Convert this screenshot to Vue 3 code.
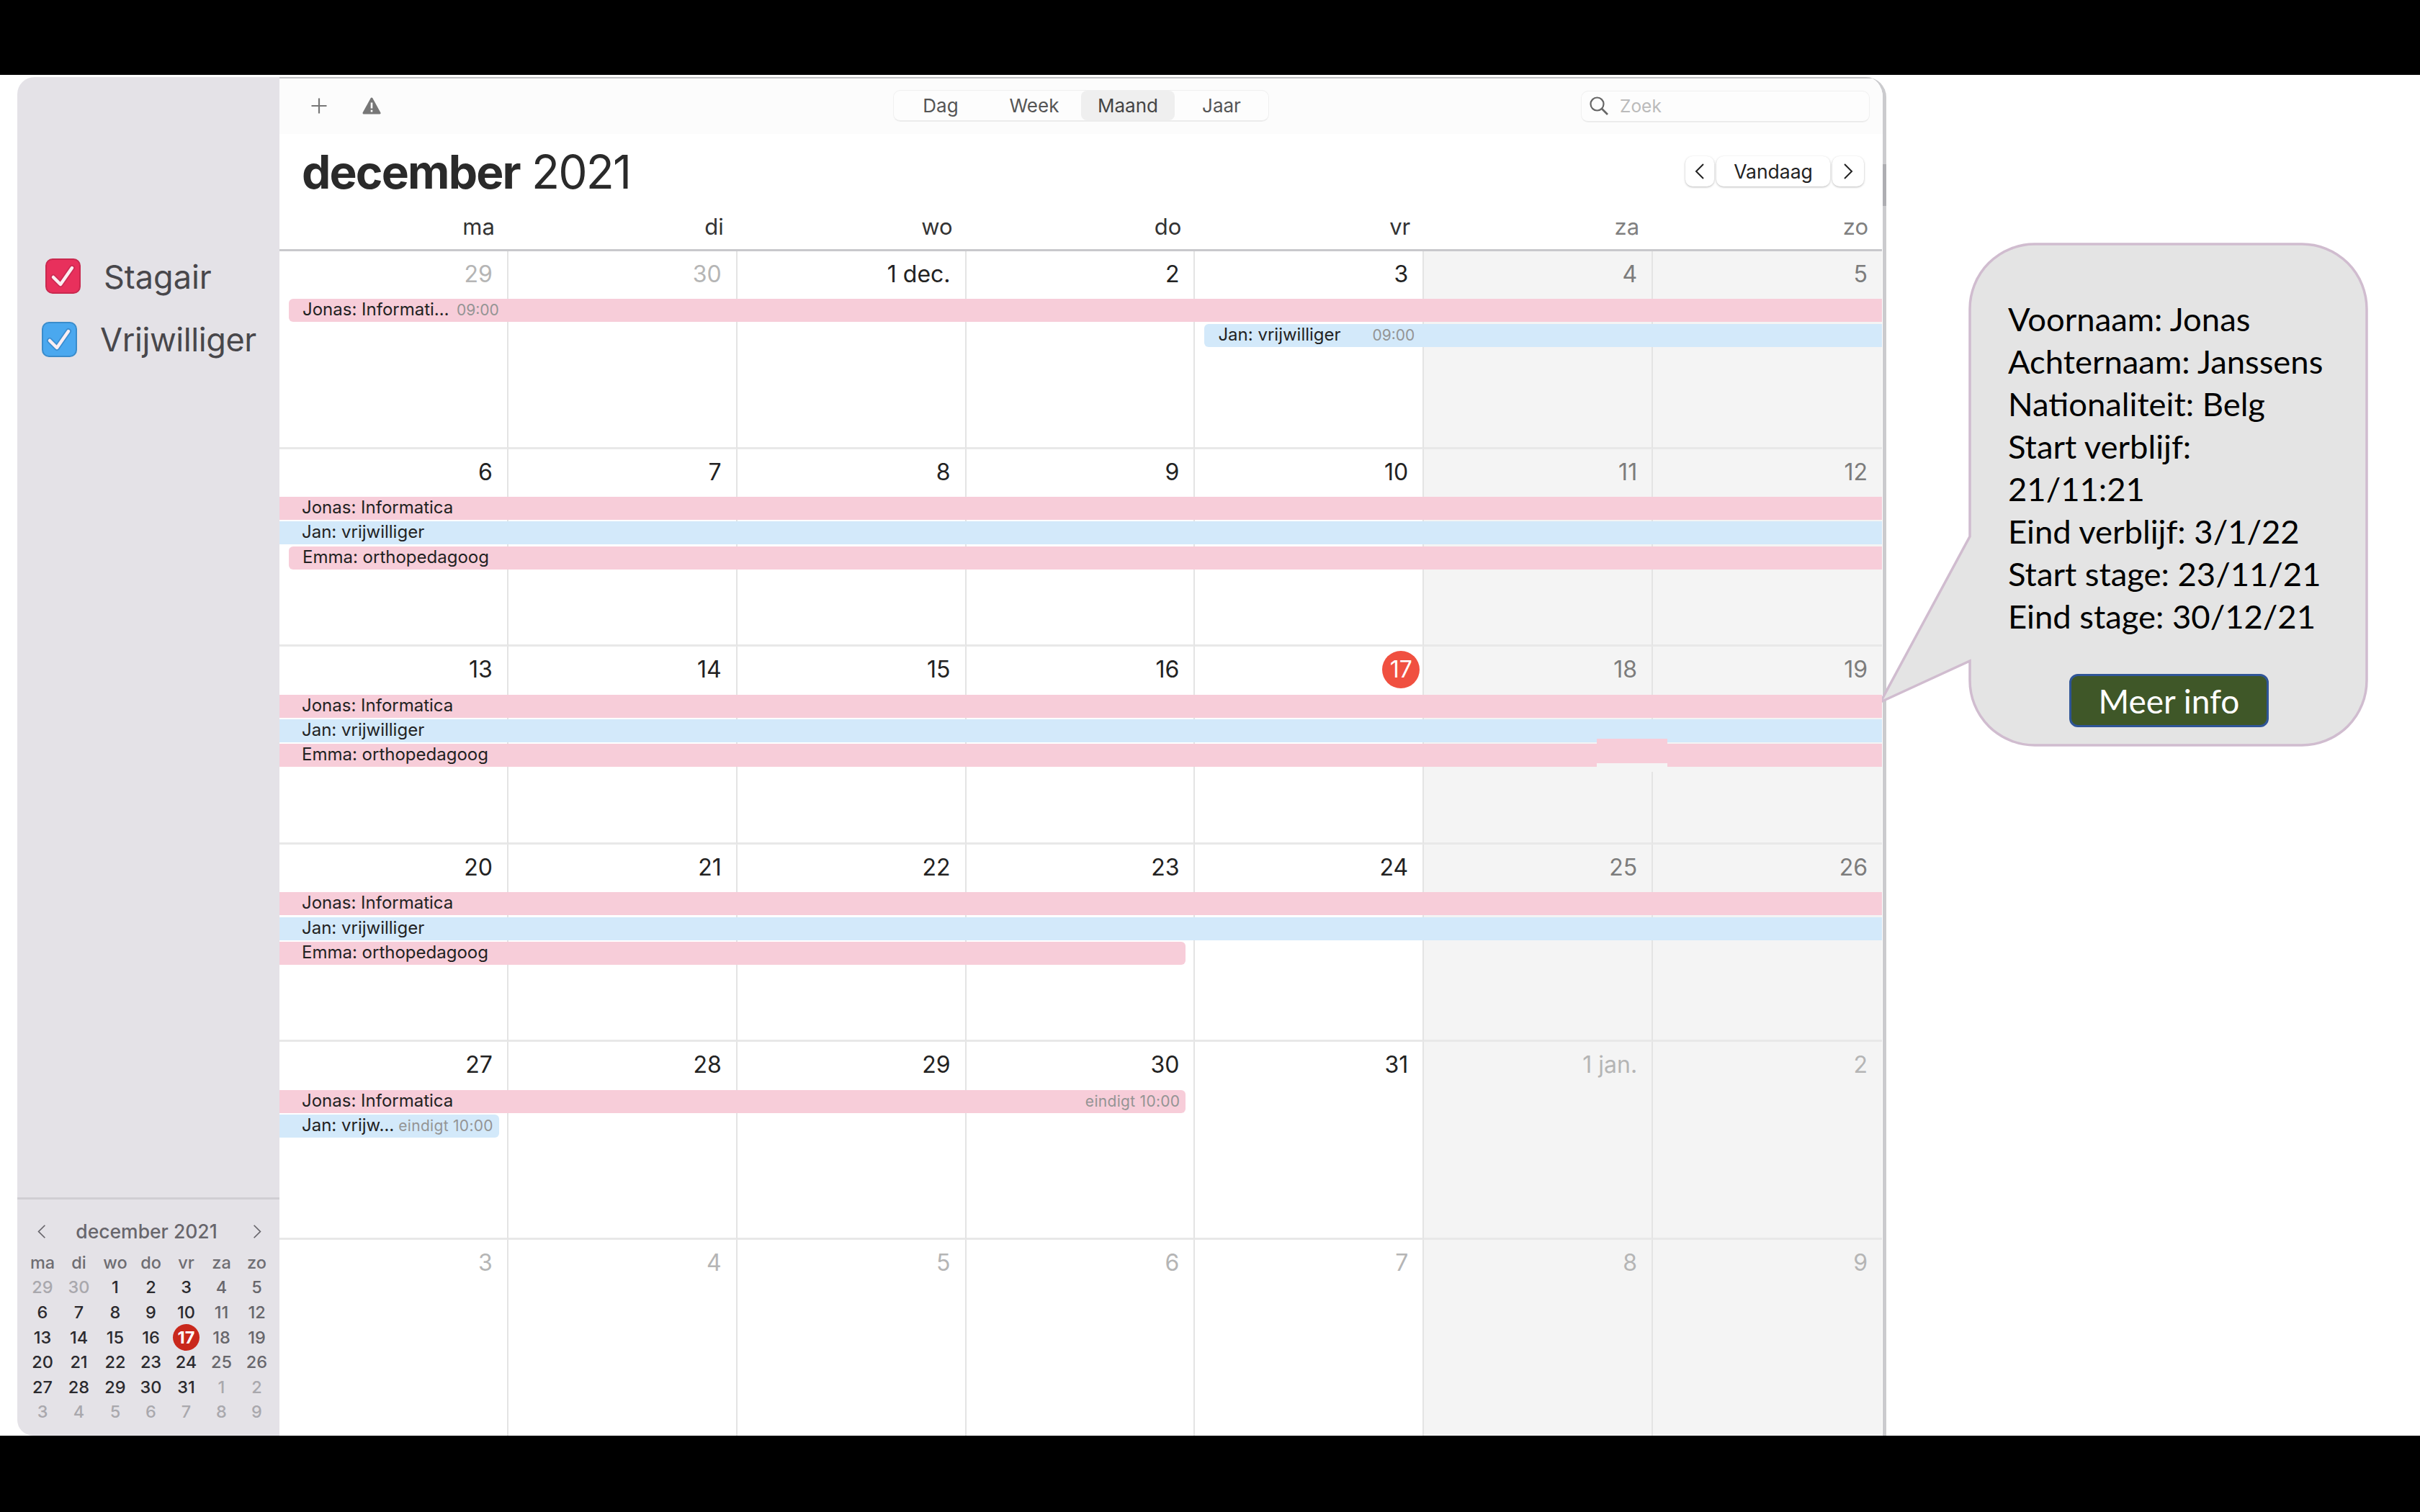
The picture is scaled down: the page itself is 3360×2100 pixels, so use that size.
<template>
  <div class="page">
    <div class="black top-bar"></div>

    <div class="middle">
      <div class="window">
        <!-- zijbalk -->
        <aside class="sidebar">
          <div class="cal-list">
            <div v-for="c in calendars" :key="c.name" :class="['cal-row', c.cls]">
              <span class="check">
                <svg viewBox="0 0 49 49" width="49" height="49">
                  <path class="halo" d="M11 26 L21 36 L37 13" fill="none" stroke-width="8" stroke-linecap="round" stroke-linejoin="round" />
                  <path d="M11 26 L21 36 L37 13" fill="none" stroke="#fbeef2" stroke-width="4.5" stroke-linecap="round" stroke-linejoin="round" />
                </svg>
              </span>
              <span class="cal-name">{{ c.name }}</span>
            </div>
          </div>

          <div class="mini">
            <div class="mini-head">
              <svg viewBox="0 0 16 24" width="14" height="21"><path d="M13 2 L3 12 L13 22" fill="none" stroke="#68666c" stroke-width="2" /></svg>
              <span class="mini-title">december 2021</span>
              <svg viewBox="0 0 16 24" width="14" height="21"><path d="M3 2 L13 12 L3 22" fill="none" stroke="#68666c" stroke-width="2" /></svg>
            </div>
            <div class="mini-grid">
              <span v-for="d in dayNames" :key="'m' + d" class="mini-day">{{ d }}</span>
              <span v-for="(n, i) in miniDays" :key="i" :class="['mini-num', miniClass(n, i)]">{{ n }}</span>
            </div>
          </div>
        </aside>

        <!-- hoofdvenster -->
        <main class="main">
          <div class="toolbar">
            <div class="tool-left">
              <svg viewBox="0 0 22 22" width="22" height="22"><path d="M11 0.5 V21.5 M0.5 11 H21.5" stroke="#777" stroke-width="2.2" fill="none" /></svg>
              <svg viewBox="0 0 26 26" width="26" height="26">
                <path d="M13 3 L24 23 H2 Z" fill="#777" stroke="#777" stroke-width="3" stroke-linejoin="round" />
                <path d="M13 8.5 V16.5 M13 18.8 V21.4" stroke="#fff" stroke-width="2.6" />
              </svg>
            </div>
            <div class="segments">
              <span v-for="s in views" :key="s" :class="['segment', { on: s === 'Maand' }]">{{ s }}</span>
            </div>
            <div class="search">
              <svg viewBox="0 0 26 26" width="26" height="26">
                <circle cx="10.5" cy="10.5" r="9" fill="none" stroke="#666" stroke-width="2.2" />
                <path d="M17 17 L25 25" stroke="#666" stroke-width="2.6" />
              </svg>
              <span>Zoek</span>
            </div>
          </div>

          <div class="title-row">
            <h1 class="title"><b>december</b> 2021</h1>
            <div class="nav">
              <span class="nav-btn prev">
                <svg viewBox="0 0 14 24" width="14" height="24"><path d="M12 2 L2 12 L12 22" fill="none" stroke="#222" stroke-width="2" /></svg>
              </span>
              <span class="nav-btn vandaag">Vandaag</span>
              <span class="nav-btn next">
                <svg viewBox="0 0 14 24" width="14" height="24"><path d="M2 2 L12 12 L2 22" fill="none" stroke="#222" stroke-width="2" /></svg>
              </span>
            </div>
          </div>

          <div class="weekdays">
            <span v-for="(d, i) in dayNames" :key="d" :class="{ weekend: i > 4 }">{{ d }}</span>
          </div>

          <div class="weeks">
            <div v-for="(w, wi) in weeks" :key="wi" class="week">
              <div
                v-for="(d, di) in w.days" :key="di"
                :class="['cell', { weekend: di > 4, dim: d.dim }]"
                :style="{ gridColumn: di + 1 }"
              >
                <span :class="['num', { today: d.today }]">{{ d.label }}</span>
              </div>
              <div
                v-for="(e, ei) in w.events" :key="'e' + ei"
                :class="['event', e.color, { start: e.start, end: e.end }]"
                :style="{ gridColumn: e.from + ' / ' + (e.to + 1), gridRow: e.row + 1 }"
              >{{ e.text }}</div>
              <span
                v-for="(e, ei) in w.events.filter(x => x.time)" :key="'t' + ei"
                :class="['time', { ending: e.end }]"
                :style="{ gridColumn: e.timeCol, gridRow: e.row + 1 }"
              >{{ e.time }}</span>
            </div>
            <!-- plakresten uit de originele schermafbeelding -->
            <div class="patch"></div>
          </div>
        </main>
      </div>
      <div class="edge-mark"></div>

      <!-- ballon met details -->
      <div class="callout">
        <svg class="callout-shape" viewBox="0 0 690 710" width="690" height="710">
          <path
            d="M216 2 H587 A90 90 0 0 1 677 92 V608 A90 90 0 0 1 587 698 H216 A90 90 0 0 1 126 608 V581 L2 638 L126 408 V92 A90 90 0 0 1 216 2 Z"
            fill="#e4e4e4" stroke="#d0bccf" stroke-width="3.5"
          />
        </svg>
        <div class="callout-body">
          <p v-for="l in details" :key="l">{{ l }}</p>
          <button class="more">Meer info</button>
        </div>
      </div>
    </div>

    <div class="black bottom-bar"></div>
  </div>
</template>

<script setup>
const dayNames = ['ma', 'di', 'wo', 'do', 'vr', 'za', 'zo']
const views = ['Dag', 'Week', 'Maand', 'Jaar']
const calendars = [
  { name: 'Stagair', cls: 'red' },
  { name: 'Vrijwilliger', cls: 'blue' },
]
const details = [
  'Voornaam: Jonas',
  'Achternaam: Janssens',
  'Nationaliteit: Belg',
  'Start verblijf:',
  '21/11:21',
  'Eind verblijf: 3/1/22',
  'Start stage: 23/11/21',
  'Eind stage: 30/12/21',
]

const miniDays = [
  29, 30, 1, 2, 3, 4, 5,
  6, 7, 8, 9, 10, 11, 12,
  13, 14, 15, 16, 17, 18, 19,
  20, 21, 22, 23, 24, 25, 26,
  27, 28, 29, 30, 31, 1, 2,
  3, 4, 5, 6, 7, 8, 9,
]
function miniClass(n, i) {
  if (i < 2 || i >= 33) return 'dim'
  if (n === 17) return 'today'
  if (i % 7 > 4) return 'we'
  return ''
}

function days(list, dimAt = () => false) {
  return list.map((label, i) => ({ label: String(label), dim: dimAt(i), today: label === 17 }))
}

const weeks = [
  {
    days: days([29, 30, '1 dec.', 2, 3, 4, 5], i => i < 2),
    events: [
      { text: 'Jonas: Informati…', color: 'pink', from: 1, to: 7, row: 1, start: true, time: '09:00', timeCol: 1 },
      { text: 'Jan: vrijwilliger', color: 'sky', from: 5, to: 7, row: 2, start: true, time: '09:00', timeCol: 5 },
    ],
  },
  {
    days: days([6, 7, 8, 9, 10, 11, 12]),
    events: [
      { text: 'Jonas: Informatica', color: 'pink', from: 1, to: 7, row: 1 },
      { text: 'Jan: vrijwilliger', color: 'sky', from: 1, to: 7, row: 2 },
      { text: 'Emma: orthopedagoog', color: 'pink', from: 1, to: 7, row: 3, start: true },
    ],
  },
  {
    days: days([13, 14, 15, 16, 17, 18, 19]),
    events: [
      { text: 'Jonas: Informatica', color: 'pink', from: 1, to: 7, row: 1 },
      { text: 'Jan: vrijwilliger', color: 'sky', from: 1, to: 7, row: 2 },
      { text: 'Emma: orthopedagoog', color: 'pink', from: 1, to: 7, row: 3 },
    ],
  },
  {
    days: days([20, 21, 22, 23, 24, 25, 26]),
    events: [
      { text: 'Jonas: Informatica', color: 'pink', from: 1, to: 7, row: 1 },
      { text: 'Jan: vrijwilliger', color: 'sky', from: 1, to: 7, row: 2 },
      { text: 'Emma: orthopedagoog', color: 'pink', from: 1, to: 4, row: 3, end: true },
    ],
  },
  {
    days: days([27, 28, 29, 30, 31, '1 jan.', 2], i => i > 4),
    events: [
      { text: 'Jonas: Informatica', color: 'pink', from: 1, to: 4, row: 1, end: true, time: 'eindigt 10:00', timeCol: 4 },
      { text: 'Jan: vrijw…', color: 'sky', from: 1, to: 1, row: 2, end: true, time: 'eindigt 10:00', timeCol: 1 },
    ],
  },
  {
    days: days([3, 4, 5, 6, 7, 8, 9], () => true),
    events: [],
  },
]
</script>

<style>
html, body { margin: 0; background: #fff; }
</style>

<style scoped>
* { box-sizing: border-box; }
.page { width: 3360px; height: 2100px; display: flex; flex-direction: column; background: #fff; font-family: Inter, "Liberation Sans", sans-serif; overflow: hidden; }
.black { background: #000; flex: none; }
.top-bar { height: 104px; }
.bottom-bar { height: 106px; }
.middle { position: relative; height: 1890px; flex: none; padding: 3px 0 0 24px; }
.window { width: 2595px; height: 1887px; display: flex; border-radius: 24px 28px 0 22px; overflow: hidden; border-right: 5px solid #cbcbce; background: #fff; }
.edge-mark { position: absolute; left: 2614px; top: 124px; width: 5px; height: 58px; background: #aeaeb2; }

.sidebar { width: 364px; flex: none; background: #e4e2e7; display: flex; flex-direction: column; justify-content: space-between; }
.cal-list { padding-top: 252px; display: flex; flex-direction: column; gap: 39px; }
.cal-row { display: flex; align-items: center; height: 49px; color: #48474b; font-size: 45px; }
.cal-row.red { padding-left: 39px; gap: 32px; }
.cal-row.red .cal-name { margin-top: 2px; }
.cal-row.blue { padding-left: 34px; gap: 32px; letter-spacing: -0.4px; }
.check { width: 49px; height: 49px; border-radius: 10px; display: flex; flex: none; }
.check svg { margin: -2px; }
.red .check { background: #e8305c; border: 2px solid #c9294f; }
.blue .check { background: #4aa8ef; border: 2px solid #3a8ccb; }
.red .halo { stroke: #b8264d; opacity: .55; }
.blue .halo { stroke: #2f78b8; opacity: .55; }

.mini { border-top: 3px solid #d0ced3; height: 331px; padding: 25px 0 0; }
.mini-head { display: flex; align-items: center; justify-content: space-between; padding: 0 24px 0 27px; font-size: 26.5px; font-weight: 500; color: #68666c; height: 38px; }
.mini-title { margin-right: 8px; }
.mini-grid { display: grid; grid-template-columns: 50px 51px 50px 49px 49px 49px 49px; grid-auto-rows: 34.6px; margin: 7px 0 0 10px; font-size: 23.5px; font-weight: 500; color: #2b2a2e; }
.mini-grid span { display: flex; align-items: center; justify-content: center; }
.mini-day { color: #6e6d72; }
.mini-num.dim { color: #a9a8ad; }
.mini-num.we { color: #67666b; }
.mini-num.today { color: #fff; font-weight: 700; position: relative; z-index: 0; }
.mini-num.today::before { content: ""; position: absolute; width: 37px; height: 37px; border-radius: 50%; background: #c9281c; z-index: -1; }

.main { flex: 1; min-width: 0; display: flex; flex-direction: column; border-top: 2px solid #c2c2c5; }
.toolbar { height: 77px; background: #fcfcfc; flex: none; display: flex; align-items: center; padding: 0 18px 0 0; position: relative; justify-content: flex-end; }
.tool-left { position: absolute; left: 44px; top: 25px; display: flex; gap: 49px; align-items: center; }
.segments { position: absolute; left: 852px; top: 16px; width: 522px; height: 44px; display: flex; background: #fdfdfd; border: 1px solid #f0f0f0; border-bottom: 2px solid #ececec; border-radius: 10px; }
.segment { flex: 1; display: flex; align-items: center; justify-content: center; font-size: 26px; color: #555; }
.segment.on { background: #efefef; border-radius: 8px; color: #444; }
.search { width: 401px; height: 44px; border: 1px solid #f0f0f0; border-bottom: 2px solid #ececec; border-radius: 10px; background: #fdfdfd; display: flex; align-items: center; gap: 16px; padding-left: 11px; font-size: 24.5px; color: #bbb; }

.title-row { height: 101px; flex: none; display: flex; align-items: center; justify-content: space-between; padding: 0 26px 0 31px; }
.title { margin: 4px 0 0; font-size: 64px; font-weight: 400; color: #2a2a2a; letter-spacing: -1.8px; line-height: 1; }
.title b { font-weight: 700; }
.nav { display: flex; gap: 3px; margin-top: 3px; }
.nav-btn { height: 42px; background: #fff; border-radius: 10px; display: flex; align-items: center; justify-content: center; box-shadow: 0 1px 3px rgba(0, 0, 0, .28); font-size: 26.5px; color: #222; }
.prev { width: 40px; }
.next { width: 44px; }
.vandaag { width: 158px; }

.weekdays { display: grid; grid-template-columns: repeat(7, 1fr); height: 62px; flex: none; width: 2225px; border-bottom: 3px solid #c8c8cc; font-size: 31px; color: #333; }
.weekdays span { text-align: right; padding-right: 19px; padding-top: 9px; }
.weekdays .weekend { color: #808080; }

.weeks { position: relative; width: 2225px; }
.week { display: grid; grid-template-columns: repeat(7, 1fr); grid-template-rows: 64px 32px 32px 32px 1fr; row-gap: 2.4px; height: 274.6px; }
.cell { grid-row: 1 / 6; border-right: 2px solid #e4e4e4; border-bottom: 3px solid #e8e8e8; padding: 12px 20px 0 0; text-align: right; font-size: 32px; color: #222; }
.cell:nth-child(7) { border-right: 0; }
.cell.weekend { background: #f4f4f4; color: #7c7c7c; }
.cell.dim { color: #b5b5b5; }
.num { display: inline-block; line-height: 36px; }
.num.today { width: 52px; height: 52px; line-height: 52px; border-radius: 50%; background: #f05040; color: #fff; text-align: center; margin: -6px -16px 0 0; }

.event { height: 32px; line-height: 30px; font-size: 24px; color: #222; padding-left: 31px; white-space: nowrap; overflow: hidden; z-index: 1; }
.event.pink { background: #f7cdd9; }
.event.sky { background: #d3e9fa; }
.event.start { margin-left: 13px; padding-left: 19px; border-radius: 6px 0 0 6px; }
.event.end { margin-right: 13px; border-radius: 0 6px 6px 0; }
.time { z-index: 2; justify-self: end; align-self: center; margin-right: 13px; font-size: 21px; color: #949494; line-height: 30px; white-space: nowrap; }
.time.ending { margin-right: 21px; letter-spacing: .3px; }

.patch { position: absolute; left: 1829px; top: 677px; width: 98px; height: 34px; background: #f7cdd9; z-index: 3; box-shadow: 0 12px 0 #f4f4f4; }

.callout { position: absolute; left: 2609px; top: 233px; width: 690px; height: 710px; }
.callout-shape { position: absolute; left: 0; top: 0; }
.callout-body { position: absolute; left: 179px; top: 76px; font-family: Lato, "Open Sans", sans-serif; font-size: 45.4px; line-height: 59px; color: #000; white-space: nowrap; }
.callout-body p { margin: 0; }
.more { display: block; width: 277px; height: 74px; margin: 51px 0 0 85px; background: #3f5728; border: 3px solid #2f5597; border-radius: 12px; color: #fff; font-family: Lato, "Open Sans", sans-serif; font-size: 46px; padding: 0; }
</style>
